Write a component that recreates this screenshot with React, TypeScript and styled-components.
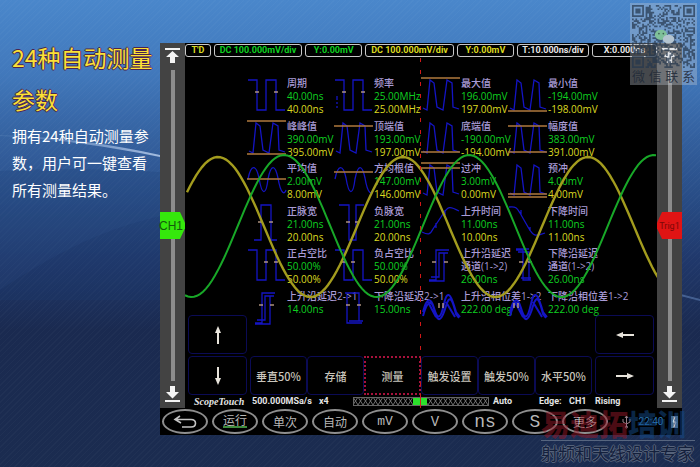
import React, { useState } from "react";
import styled, { createGlobalStyle, css } from "styled-components";

const LATIN = '"Open Sans", "Noto Sans", "Noto Sans CJK SC", sans-serif';
const CJK = '"Noto Sans CJK SC", sans-serif';
const GREEN = "#0fd020";
const YELLOW = "#dcda20";

const GlobalStyle = createGlobalStyle`
  *, *::before, *::after { box-sizing: border-box; }
  body { margin: 0; background: #1a2b4f; font-family: ${CJK}; }
  h1, p, dl, dt, dd { margin: 0; }
  button { font: inherit; color: inherit; background: none; border: 0; padding: 0; cursor: pointer; }
`;

const Page = styled.main`
  position: relative;
  min-height: 100vh;
  display: grid;
  grid-template-columns: 160px minmax(0, 1fr) 18px;
  align-items: start;
  padding-top: 43px;
  overflow: hidden;
  background:
    repeating-linear-gradient(135deg, rgba(255, 255, 255, 0.025) 0 1px, transparent 1px 4px),
    linear-gradient(180deg, #4a87cb 0, #4179bc 70px, #335f9d 140px, #284c85 200px, #20386b 260px, #1a2a50 330px, #1b2c50 100%);
`;

const Swoosh = styled.svg`
  position: absolute;
  inset: 0;
  width: 100%;
  height: 100%;
`;

const Intro = styled.section`
  position: relative;
  padding: 0 0 0 12px;
  white-space: nowrap;
`;

const Title = styled.h1`
  margin-top: -7px;
  font-size: 23px;
  line-height: 42px;
  font-weight: 400;
  color: #fbe135;
  text-shadow: 1px 0 #4a2450, -1px 0 #4a2450, 0 1px #4a2450, 0 -1px #4a2450;
`;

const Description = styled.p`
  margin-top: 2px;
  font-size: 15px;
  line-height: 27px;
  color: #fff;
`;

const Scope = styled.section`
  position: relative;
  background: #000;
`;

const ScopeBody = styled.div`
  display: grid;
  grid-template-columns: 25px minmax(0, 1fr) 25px;
`;

const Rail = styled.div`
  display: flex;
  flex-direction: column;
  align-items: center;
  padding: 3px 0 4px;
  background: #434343;
`;

const RailButton = styled.button`
  display: flex;
  height: 20px;
`;

const SliderSlot = styled.label`
  position: relative;
  display: grid;
  grid-template-rows: minmax(0, 1fr);
  flex: 1 1 0;
  min-height: 0;
  margin: 4px 0 3px;
  width: 25px;
`;

const Slider = styled.input<{ $color: string; $side: "left" | "right" }>`
  appearance: none;
  writing-mode: vertical-lr;
  width: 25px;
  height: 0;
  min-height: 100%;
  margin: 0;
  background: linear-gradient(90deg, transparent 11px, #8c8c8c 11px 15px, transparent 15px);
  &::-webkit-slider-thumb {
    appearance: none;
    width: 25px;
    height: 27px;
    background: ${(p) => p.$color};
    clip-path: ${(p) =>
      p.$side === "left"
        ? "polygon(0 0, 80% 0, 100% 40%, 100% 60%, 80% 100%, 0 100%)"
        : "polygon(100% 0, 20% 0, 0 40%, 0 60%, 20% 100%, 100% 100%)"};
  }
`;

const SliderTag = styled.span<{ $side: "left" | "right" }>`
  position: absolute;
  inset: 0;
  display: flex;
  align-items: center;
  justify-content: center;
  pointer-events: none;
  ${(p) =>
    p.$side === "left"
      ? css`
          font: 12px "Liberation Sans", sans-serif;
          color: #135a0c;
          padding-right: 3px;
        `
      : css`
          font: 9px Roboto, sans-serif;
          color: #7a0808;
        `}
`;

const Screen = styled.div`
  position: relative;
  display: flex;
  flex-direction: column;
  min-width: 0;
`;

const PillRow = styled.div`
  display: flex;
  gap: 3px;
  padding-top: 1px;
`;

const Pill = styled.div<{ $color: string; $grow: number }>`
  flex: ${(p) => p.$grow} 1 0;
  height: 13px;
  min-width: 0;
  border: 1px solid #c8c8c8;
  border-radius: 3px;
  text-align: center;
  white-space: nowrap;
  font: 700 9px/11px Roboto, sans-serif;
  color: ${(p) => p.$color};
`;

const Waves = styled.svg`
  position: absolute;
  left: 0;
  top: 0;
  width: 100%;
  height: 100%;
  pointer-events: none;
`;

const Measurements = styled.div`
  display: grid;
  grid-template-columns: repeat(4, minmax(0, 1fr));
  grid-template-rows: repeat(6, 1fr);
  height: 255px;
  margin: 20px 61px 0 63px;
`;

const Measurement = styled.div`
  display: grid;
  grid-template-columns: 39px minmax(0, 1fr);
`;

const Glyph = styled.svg`
  display: block;
  width: 39px;
  height: 38px;
  overflow: visible;
  fill: none;
  stroke: #1414c4;
  stroke-width: 1.3;
`;

const Readout = styled.dl`
  font: 500 10px/13px ${LATIN};
  white-space: nowrap;
`;

const Name = styled.dt`
  color: #a99bd6;
`;

const Value = styled.dd<{ $color: string }>`
  color: ${(p) => p.$color};
`;

const Keypad = styled.div`
  display: grid;
  grid-template-columns: 59px minmax(0, 1fr) 59px;
  gap: 2px 3px;
  padding: 0 3px;
  margin-top: -17px;
`;

const Keys = styled.div`
  display: grid;
  grid-template-columns: repeat(6, minmax(0, 1fr));
`;

const Key = styled.button<{ $active?: boolean }>`
  display: flex;
  align-items: center;
  justify-content: center;
  height: 39px;
  min-width: 0;
  border: 1px solid #0b0b55;
  border-radius: 4px;
  white-space: nowrap;
  font: 500 11px ${CJK};
  color: #c9c5bc;
  ${(p) =>
    p.$active &&
    css`
      border: 2px dotted #a8123c;
      border-radius: 0;
    `}
`;

const StatusRow = styled.div`
  display: grid;
  grid-template-columns: 58px 67px 34px minmax(0, 1fr) 46px 30px 26px 62px;
  align-items: center;
  height: 13px;
  padding-left: 9px;
  font: 700 9px/13px Roboto, sans-serif;
  color: #e4e4e4;
  white-space: nowrap;
`;

const Brand = styled.span`
  font: italic 700 10px/13px "Liberation Serif", serif;
`;

const Memory = styled.svg`
  display: block;
  width: calc(100% - 4px);
  height: 9px;
`;

const Dock = styled.nav`
  display: grid;
  grid-template-columns: repeat(9, 46px) 1fr;
  column-gap: 4px;
  align-items: center;
  height: 27px;
  padding-left: 2px;
`;

const DockButton = styled.button<{ $size: number; $mono?: boolean }>`
  display: flex;
  align-items: center;
  justify-content: center;
  height: 25px;
  border: 2px solid #8e8e8e;
  border-radius: 50%;
  font: ${(p) => p.$size}px/14px ${(p) => (p.$mono ? '"Liberation Mono", monospace' : CJK)};
  color: #b8b8b8;
`;

const Running = styled.span`
  border-bottom: 2px solid #3f8c3f;
  line-height: 13px;
  margin-top: -3px;
`;

const Tray = styled.div`
  display: flex;
  align-items: center;
  justify-content: space-between;
  padding: 0 4px 0 10px;
  font: 10px Roboto, sans-serif;
  color: #2a78b4;
`;

const Contact = styled.aside`
  position: absolute;
  right: 3px;
  top: 3px;
  width: 67px;
  padding: 2px;
  background: rgba(190, 200, 210, 0.36);
  text-align: center;
  white-space: nowrap;
  font: 13px/15px ${CJK};
  color: rgba(30, 40, 55, 0.85);
  display: grid;
`;

const ContactText = styled.div`
  display: flex;
  justify-content: space-between;
`;

const Watermark = styled.aside`
  position: absolute;
  right: 5px;
  bottom: 4px;
  width: 154px;
  white-space: nowrap;
  font-family: ${CJK};
`;

const WatermarkName = styled.div`
  display: flex;
  font-size: 29px;
  line-height: 26px;
  font-weight: 900;
  padding-bottom: 4px;
  border-bottom: 1px solid #56657f;
`;

const Tint = styled.span<{ $color: string }>`
  color: ${(p) => p.$color};
`;

const WatermarkLine = styled.div`
  margin-top: 2px;
  font-size: 17px;
  line-height: 20px;
  color: #14203c;
  text-shadow: 1px 0 #56637b, -1px 0 #56637b, 0 1px #56637b, 0 -1px #56637b;
`;

const PULSES = "M1 31L5 33L8 3L12 6L15 30L21 33L25 3L30 6L31 30L37 32";
const SQUARE = "M0 3H9V33H18V3H28V33H37";
const SINE = "M0 17C3 2 8 2 11 16C14 34 18 34 20 17C23 2 27 2 30 16C33 34 37 32 38 28";
const STEP = "M7 33H14V3H27M9 30H17V6H26M7 34H22V6";
const PHASE = "M1 22C5 6 9 8 12 18S18 32 22 14S30 8 34 22L38 27M1 26C6 8 10 10 13 22S20 30 24 16S31 12 34 24L37 28M6 12L14 27M24 12L33 27";

type Shape = { path: string; lines?: number[]; ticks?: [number, number][]; bold?: boolean };
type Item = { name: string; more?: string; green: string; yellow?: string; shape: Shape };

const items: Item[] = [
  { name: "周期", green: "40.00ns", yellow: "40.00ns", shape: { path: SQUARE, ticks: [[9, 15], [28, 15]] } },
  { name: "频率", green: "25.00MHz", yellow: "25.00MHz", shape: { path: SQUARE + "M2 19V23M2 25V27M2 29V31", ticks: [[9, 15], [28, 15]] } },
  { name: "最大值", green: "196.00mV", yellow: "197.00mV", shape: { path: PULSES, lines: [1] } },
  { name: "最小值", green: "-194.00mV", yellow: "-198.00mV", shape: { path: PULSES, lines: [34] } },
  { name: "峰峰值", green: "390.00mV", yellow: "395.00mV", shape: { path: PULSES, lines: [1, 34] } },
  { name: "顶端值", green: "193.00mV", yellow: "197.00mV", shape: { path: PULSES, lines: [6] } },
  { name: "底端值", green: "-190.00mV", yellow: "-194.00mV", shape: { path: PULSES, lines: [32] } },
  { name: "幅度值", green: "383.00mV", yellow: "391.00mV", shape: { path: PULSES, lines: [6, 32] } },
  { name: "平均值", green: "2.00mV", yellow: "8.00mV", shape: { path: SINE, lines: [17] } },
  { name: "方均根值", green: "147.00mV", yellow: "146.00mV", shape: { path: SINE, lines: [10] } },
  { name: "过冲", green: "3.00mV", yellow: "0.00mV", shape: { path: PULSES, lines: [1, 6] } },
  { name: "预冲", green: "4.00mV", yellow: "4.00mV", shape: { path: PULSES, lines: [32, 35] } },
  { name: "正脉宽", green: "21.00ns", yellow: "20.00ns", shape: { path: "M6 35H13V0H23V35H29", ticks: [[12, 17], [23, 17]] } },
  { name: "负脉宽", green: "21.00ns", yellow: "20.00ns", shape: { path: "M4 0H14V35H21V0H29", ticks: [[13, 17], [22, 17]] } },
  { name: "上升时间", green: "11.00ns", yellow: "10.00ns", shape: { path: "M0 27C6 30 8 30 11 24L21 9C26 1 28 1 37 6M14 18V23M23 5V10" } },
  { name: "下降时间", green: "11.00ns", yellow: "11.00ns", shape: { path: "M0 2C7 1 8 3 11 8L19 22C24 31 26 32 36 28M12 5V10M21 22V26" } },
  { name: "正占空比", green: "50.00%", yellow: "50.00%", shape: { path: SQUARE, ticks: [[18, 15], [28, 15]] } },
  { name: "负占空比", green: "50.00%", yellow: "50.00%", shape: { path: SQUARE, ticks: [[9, 15], [18, 15]] } },
  { name: "上升沿延迟", more: "通道(1->2)", green: "26.00ns", shape: { path: STEP, ticks: [[12, 15], [24, 15]] } },
  { name: "下降沿延迟", more: "通道(1->2)", green: "26.00ns", shape: { path: "M7 3H14V33H22M9 5H20V33M12 31H22M7 2H20", ticks: [[12, 15], [21, 15]] } },
  { name: "上升沿延迟2->1", green: "14.00ns", shape: { path: STEP, ticks: [[13, 15], [24, 15]] } },
  { name: "下降沿延迟2->1", green: "15.00ns", shape: { path: "M10 3H24V31H28M12 5V33H27M14 31H24", ticks: [[13, 15], [24, 15]] } },
  { name: "上升沿相位差1->2", green: "222.00 deg", shape: { path: PHASE, bold: true, ticks: [[17, 15], [21, 15]] } },
  { name: "下降沿相位差1->2", green: "222.00 deg", shape: { path: PHASE, bold: true, ticks: [[5, 15], [9, 15]] } },
];

const pills = [
  { text: "T'D", color: YELLOW, grow: 25 },
  { text: "DC 100.000mV/div", color: GREEN, grow: 90 },
  { text: "Y:0.00mV", color: GREEN, grow: 58 },
  { text: "DC 100.000mV/div", color: YELLOW, grow: 90 },
  { text: "Y:0.00mV", color: YELLOW, grow: 58 },
  { text: "T:10.000ns/div", color: "#e6e6e6", grow: 73 },
  { text: "X:0.000ns", color: "#e6e6e6", grow: 66 },
];

const keys = ["垂直50%", "存储", "测量", "触发设置", "触发50%", "水平50%"];

const dock = [
  { text: "单次", size: 12 },
  { text: "自动", size: 12 },
  { text: "mV", size: 13, mono: true },
  { text: "V", size: 14, mono: true },
  { text: "ns", size: 18, mono: true },
  { text: "S", size: 18, mono: true },
  { text: "更多", size: 12 },
];

/** Samples one cosine trace whose crest sits at `crest`, 185 units per period. */
function trace(crest: number, from: number, to: number, mid: number, amp: number) {
  let d = "";
  for (let x = from; x <= to; x += 3) {
    const y = mid - amp * Math.cos(((x - crest) / 185) * 2 * Math.PI);
    d += `${d ? "L" : "M"}${x} ${y.toFixed(1)}`;
  }
  return d;
}

const YELLOW_TRACE = trace(33, 2, 473, 184, 70);
const GREEN_TRACE = trace(99, 0, 473, 183, 71);

const CODE_SIZE = 37;
function codePath() {
  let seed = 20240;
  let d = "";
  const inFinder = (x: number, y: number) =>
    (x < 8 && y < 8) || (x > CODE_SIZE - 9 && y < 8) || (x < 8 && y > CODE_SIZE - 9);
  for (let y = 0; y < CODE_SIZE; y++) {
    for (let x = 0; x < CODE_SIZE; x++) {
      seed = (seed * 1103515245 + 12345) % 2147483648;
      if (!inFinder(x, y) && seed / 2147483648 > 0.5) d += `M${x} ${y}h1v1h-1z`;
    }
  }
  for (const [x, y] of [[0, 0], [CODE_SIZE - 7, 0], [0, CODE_SIZE - 7]]) {
    d += `M${x} ${y}h7v7h-7zM${x + 1} ${y + 1}v5h5v-5zM${x + 2} ${y + 2}h3v3h-3z`;
  }
  return d;
}
const CODE = codePath();

function EndArrow({ down }: { down?: boolean }) {
  return (
    <svg width="15" height="20" viewBox="0 0 15 20" fill="#f4f4f4">
      {down ? (
        <path d="M5 2h5v6h4l-6.500 6.500L1 8h4zM0 16h15v2H0z" />
      ) : (
        <path d="M0 2h15v2H0zM7.500 5L14 11h-4v6H5v-6H1z" />
      )}
    </svg>
  );
}

function KeyArrow({ turn }: { turn: number }) {
  return (
    <svg width="20" height="20" viewBox="-10 -10 20 20">
      <g transform={`rotate(${turn})`}>
        <path d="M0 9V-5" stroke="#e8e4dc" strokeWidth="2" />
        <path d="M0 -9L3 -2H-3Z" fill="#e8e4dc" />
      </g>
    </svg>
  );
}

function SideRail({ side, tag, color, name }: { side: "left" | "right"; tag: string; color: string; name: string }) {
  const [value, setValue] = useState(50);
  return (
    <Rail>
      <RailButton aria-label={`${name} top`} onClick={() => setValue(0)}>
        <EndArrow />
      </RailButton>
      <SliderSlot>
        <Slider
          type="range"
          aria-label={name}
          $side={side}
          $color={color}
          value={value}
          onChange={(e) => setValue(Number(e.target.value))}
        />
        <SliderTag $side={side}>{tag}</SliderTag>
      </SliderSlot>
      <RailButton aria-label={`${name} bottom`} onClick={() => setValue(100)}>
        <EndArrow down />
      </RailButton>
    </Rail>
  );
}

function ShapeGlyph({ shape }: { shape: Shape }) {
  return (
    <Glyph viewBox="0 0 39 38" aria-hidden="true">
      <path d={shape.path} strokeWidth={shape.bold ? 2 : undefined} />
      {shape.lines?.map((y) => (
        <path key={y} d={`M-1 ${y}H38`} stroke="#b07a3e" />
      ))}
      {shape.ticks?.map(([x, y]) => (
        <path key={x} d={shape.bold ? `M${x} ${y - 2}v5` : `M${x - 2} ${y}h4`} stroke="#c8a890" />
      ))}
    </Glyph>
  );
}

export default function App() {
  const [active, setActive] = useState("测量");
  return (
    <>
      <GlobalStyle />
      <Page>
        <Swoosh viewBox="0 0 700 467" preserveAspectRatio="none" aria-hidden="true">
          <defs>
            <linearGradient id="streak" x1="0" x2="1" y1="0" y2="0">
              <stop offset="0" stopColor="#a9c4ea" stopOpacity="0.1" />
              <stop offset="0.220" stopColor="#c4d8f4" stopOpacity="0.750" />
              <stop offset="1" stopColor="#6f94cc" stopOpacity="0.450" />
            </linearGradient>
          </defs>
          <path d="M0 171C80 166 130 171 200 174V300H0Z" fill="#1b3b70" opacity="0.250" />
          <path d="M0 290C60 250 110 225 180 212V0H0Z" fill="#5b8fd0" opacity="0.060" />
          <path d="M0 135C60 137 110 144 160 155C360 200 560 262 700 299V301C560 265 360 204 160 157C110 147 60 139 0 136Z" fill="url(#streak)" />
        </Swoosh>

        <Intro>
          <Title>
            24种自动测量
            <br />
            参数
          </Title>
          <Description>
            拥有24种自动测量参
            <br />
            数，用户可一键查看
            <br />
            所有测量结果。
          </Description>
        </Intro>

        <Scope>
          <ScopeBody>
            <SideRail side="left" tag="CH1" color="#35e80c" name="CH1 position" />
            <Screen>
              <PillRow>
                {pills.map((p, i) => (
                  <Pill key={i} $color={p.color} $grow={p.grow}>
                    {p.text}
                  </Pill>
                ))}
              </PillRow>
              <Measurements>
                {items.map((m) => (
                  <Measurement key={m.name}>
                    <ShapeGlyph shape={m.shape} />
                    <Readout>
                      <Name>{m.name}</Name>
                      {m.more && <Name>{m.more}</Name>}
                      <Value $color={GREEN}>{m.green}</Value>
                      {m.yellow && <Value $color={YELLOW}>{m.yellow}</Value>}
                    </Readout>
                  </Measurement>
                ))}
              </Measurements>
              <Waves viewBox="0 0 472 365" preserveAspectRatio="none" aria-hidden="true">
                <path d={YELLOW_TRACE} fill="none" stroke="#a39c1e" strokeWidth="2.400" />
                <path d={GREEN_TRACE} fill="none" stroke="#18a828" strokeWidth="2" />
                <path d="M235.500 15V365" stroke="#d01818" strokeDasharray="4 8" />
              </Waves>
              <Keypad>
                <Key aria-label="上">
                  <KeyArrow turn={0} />
                </Key>
                <div />
                <Key aria-label="左">
                  <KeyArrow turn={-90} />
                </Key>
                <Key aria-label="下">
                  <KeyArrow turn={180} />
                </Key>
                <Keys>
                  {keys.map((k) => (
                    <Key key={k} $active={k === active} onClick={() => setActive(k)}>
                      {k}
                    </Key>
                  ))}
                </Keys>
                <Key aria-label="右">
                  <KeyArrow turn={90} />
                </Key>
              </Keypad>
              <StatusRow>
                <Brand>ScopeTouch</Brand>
                <span>500.000MSa/s</span>
                <span>x4</span>
                <Memory viewBox="0 0 136 9" preserveAspectRatio="none" aria-hidden="true">
                  <defs>
                    <pattern id="mesh" width="5" height="8" patternUnits="userSpaceOnUse">
                      <path d="M0 0L5 8M5 0L0 8" stroke="#8a8a8a" strokeWidth="0.800" />
                    </pattern>
                  </defs>
                  <rect x="0.500" y="0.500" width="135" height="8" fill="url(#mesh)" stroke="#666" />
                  <path d="M60 1H74V8H60Z" fill="#2be02b" />
                  <path d="M67.500 0V9" stroke="#d02020" />
                </Memory>
                <span>Auto</span>
                <span>Edge:</span>
                <span>CH1</span>
                <span>Rising</span>
              </StatusRow>
            </Screen>
            <SideRail side="right" tag="Trig1" color="#e01414" name="Trigger level" />
          </ScopeBody>
          <Dock>
            <DockButton $size={12} aria-label="返回">
              <svg width="24" height="14" viewBox="0 0 24 14" fill="none" stroke="#c4c4c4" strokeWidth="1.600">
                <path d="M7 1L2 4.500L8 8M2 4.500H18C24 4.500 24 12 18 12H9" />
              </svg>
            </DockButton>
            <DockButton $size={12}>
              <Running>运行</Running>
            </DockButton>
            {dock.map((d) => (
              <DockButton key={d.text} $size={d.size} $mono={d.mono}>
                {d.text}
              </DockButton>
            ))}
            <Tray>
              <svg width="9" height="14" viewBox="0 0 9 14" fill="none" stroke="#9a8088" aria-hidden="true">
                <path d="M4.500 1V12M1 4V7L4.500 9L8 7V4M3 3L4.500 1L6 3" />
                <circle cx="4.500" cy="12" r="1" />
              </svg>
              <span>22:40</span>
              <svg width="7" height="12" viewBox="0 0 7 12" aria-hidden="true">
                <rect width="7" height="12" fill="#6f8396" />
                <path d="M4 1L2 6H5L3 11" fill="none" stroke="#e8eef4" />
              </svg>
            </Tray>
          </Dock>
        </Scope>

        <Contact>
          <svg width="63" height="63" viewBox={`0 0 ${CODE_SIZE} ${CODE_SIZE}`} role="img" aria-label="微信二维码">
            <path d={CODE} fill="#26384e" fillRule="evenodd" opacity="0.720" />
            <ellipse cx="17" cy="17.500" rx="3.600" ry="3" fill="#7fc09a" />
            <ellipse cx="21.500" cy="20" rx="3.400" ry="2.600" fill="#b4c4d0" />
            <circle cx="15.800" cy="16.800" r="0.500" fill="#3c6050" />
            <circle cx="18.400" cy="16.800" r="0.500" fill="#3c6050" />
          </svg>
          <ContactText>
            <span>微</span>
            <span>信</span>
            <span>联</span>
            <span>系</span>
          </ContactText>
        </Contact>

        <Watermark>
          <WatermarkName>
            <Tint $color="rgba(150, 24, 40, 0.5)">易迪拓</Tint>
            <Tint $color="rgba(20, 76, 140, 0.5)">培训</Tint>
          </WatermarkName>
          <WatermarkLine>射频和天线设计专家</WatermarkLine>
        </Watermark>
      </Page>
    </>
  );
}
